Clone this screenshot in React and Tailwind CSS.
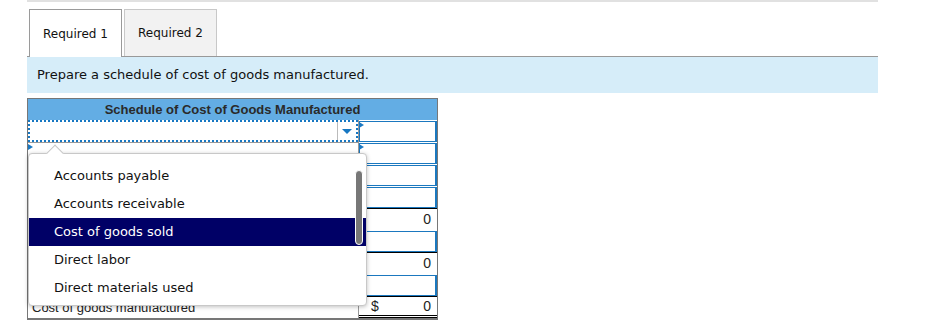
import React from 'react';

const verdana = { fontFamily: '"DejaVu Sans", Verdana, sans-serif' };
const arial = { fontFamily: '"Liberation Sans", Arial, sans-serif' };

const options = [
  'Accounts payable',
  'Accounts receivable',
  'Cost of goods sold',
  'Direct labor',
  'Direct materials used',
];

// right column: 'in' = editable cell, 'tot' = computed total
const valueRows = ['in', 'in', 'in', 'in', 'tot', 'in', 'tot', 'in', 'grand'];

const Tick = ({ className = '' }) => (
  <span
    className={
      'absolute w-0 h-0 border-y-[3px] border-y-transparent border-l-[5px] border-l-[#1a78c2] ' +
      className
    }
  />
);

const ValueCell = ({ kind, index }) => {
  if (kind === 'in') {
    return (
      <div className="relative h-[22px] pt-px">
        <div className="h-[21px] border border-[#1b78bf] border-r-2" />
        {index < 2 && <Tick className="left-0 top-[2px]" />}
      </div>
    );
  }
  return (
    <div
      className={
        'h-[22px] border-t border-t-black flex items-center justify-between pl-[12px] pr-[6px] text-[14px] text-[#222] ' +
        (kind === 'grand' ? 'border-b-[3px] border-b-black border-double' : '')
      }
      style={arial}
    >
      <span>{kind === 'grand' ? '$' : ''}</span>
      <span>0</span>
    </div>
  );
};

export default function App() {
  return (
    <div className="relative w-[938px] h-[328px] bg-white overflow-hidden">
      <div className="ml-[27px] w-[851px] h-[2px] bg-[#e1e1e1]" />

      <div className="mt-[7px] ml-[29px] flex items-end gap-[2px]" style={verdana}>
        <div className="relative z-10 -mb-px w-[93px] h-[48px] bg-white border border-b-0 border-[#9a9a9a] flex items-center justify-center text-[12px] text-[#111]">
          Required 1
        </div>
        <div className="w-[93px] h-[47px] bg-[#f2f2f2] border border-b-0 border-[#c8c8c8] flex items-center justify-center text-[12px] text-[#111]">
          Required 2
        </div>
      </div>

      <div
        className="ml-[27px] w-[851px] h-[37px] border-t border-[#999] bg-[#d6edf9] flex items-center pl-[10px] text-[13px] text-[#111]"
        style={verdana}
      >
        Prepare a schedule of cost of goods manufactured.
      </div>

      <div className="mt-[5px] ml-[27px] w-[411px] border border-[#777] border-b-2">
        <div
          className="h-[21px] bg-[#63ade4] flex items-center justify-center font-bold text-[13px] text-[#2a2a2a]"
          style={arial}
        >
          Schedule of Cost of Goods Manufactured
        </div>
        <div className="flex">
          <div className="w-[330px] flex flex-col">
            <div className="h-[22px] border-2 border-dotted border-[#1677c2] flex">
              <div className="flex-1" />
              <div className="w-[19px] border-l border-[#bbb] flex items-center justify-center">
                <span className="w-0 h-0 border-x-[5px] border-x-transparent border-t-[5px] border-t-[#1677c2]" />
              </div>
            </div>
            {valueRows.slice(1).map((k, i) => (
              <div
                key={i}
                className="relative h-[22px] border-t border-[#999] flex items-center pl-[4px] text-[13px] text-[#222]"
                style={arial}
              >
                {i === 0 && <Tick className="left-0 top-[1px]" />}
                {k === 'grand' ? 'Cost of goods manufactured' : ''}
              </div>
            ))}
          </div>
          <div className="w-[79px] border-l border-[#999] flex flex-col">
            {valueRows.map((k, i) => (
              <ValueCell key={i} kind={k} index={i} />
            ))}
          </div>
        </div>
      </div>

      {/* open dropdown list */}
      <div
        className="absolute left-[28px] top-[153px] w-[339px] h-[153px] bg-white border border-[#c8c8c8] rounded-[4px] shadow-[0_1px_4px_rgba(0,0,0,0.25)]"
        style={verdana}
      >
        <span className="absolute left-[20px] top-[-7px] w-[12px] h-[12px] rotate-45 bg-white border-l border-t border-[#c8c8c8]" />
        <div className="relative overflow-hidden h-full rounded-[4px] pt-[8px]">
          {options.map((o) => (
            <div
              key={o}
              className={
                'h-[28px] flex items-center pl-[25px] text-[13px] ' +
                (o === 'Cost of goods sold' ? 'bg-[#000066] text-white' : 'text-[#111]')
              }
            >
              {o}
            </div>
          ))}
          <div className="absolute left-[326px] top-[16px] w-[8px] h-[75px] rounded-full bg-[#777] border border-white" />
        </div>
      </div>
    </div>
  );
}
